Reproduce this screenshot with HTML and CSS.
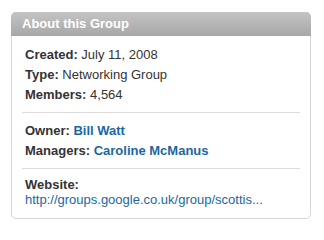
FILE: index.html
```html
<!DOCTYPE html>
<html>
<head>
<meta charset="utf-8">
<link rel="stylesheet" href="styles.css">
</head>
<body>
<div class="page">
  <div class="box">
    <div class="box-head">About this Group</div>
    <div class="box-body">
      <div class="section">
        <div class="row"><b>Created:</b> July 11, 2008</div>
        <div class="row"><b>Type:</b> Networking Group</div>
        <div class="row"><b>Members:</b> 4,564</div>
      </div>
      <div class="section">
        <div class="row"><b>Owner:</b> <a class="name" href="#">Bill Watt</a></div>
        <div class="row"><b>Managers:</b> <a class="name" href="#">Caroline McManus</a></div>
      </div>
      <div class="section last">
        <div class="label"><b>Website:</b></div>
        <div class="label"><a class="url" href="#">http://groups.google.co.uk/group/scottis...</a></div>
      </div>
    </div>
  </div>
</div>
</body>
</html>
```

FILE: styles.css
```css
html, body {
  margin: 0;
  padding: 0;
  background: #ffffff;
}
.page {
  padding: 12px 0 0 11px;
  font-family: "Liberation Sans", Arial, sans-serif;
  font-size: 13px;
  color: #333333;
}
.box {
  width: 298px;
  border: 1px solid #d6d6d6;
  border-radius: 5px;
  background: #ffffff;
}
.box-head {
  margin: -1px -1px 0 -1px;
  height: 24px;
  line-height: 24px;
  padding-left: 11px;
  border-radius: 5px 5px 0 0;
  background: linear-gradient(#c4c4c4, #a7a7a7);
  color: #ffffff;
  font-weight: bold;
  font-size: 13px;
}
.box-body {
  padding: 1px 10px 11px 10px;
}
.section {
  padding: 8px 3px 7px 3px;
  border-bottom: 1px solid #dcdcdc;
}
.section.last {
  border-bottom: none;
  padding-bottom: 0;
}
.row {
  line-height: 20px;
}
.label {
  line-height: 15px;
}
.name {
  color: #1a68a4;
  font-weight: bold;
  text-decoration: none;
}
.url {
  color: #1a68a4;
  text-decoration: none;
}
```
